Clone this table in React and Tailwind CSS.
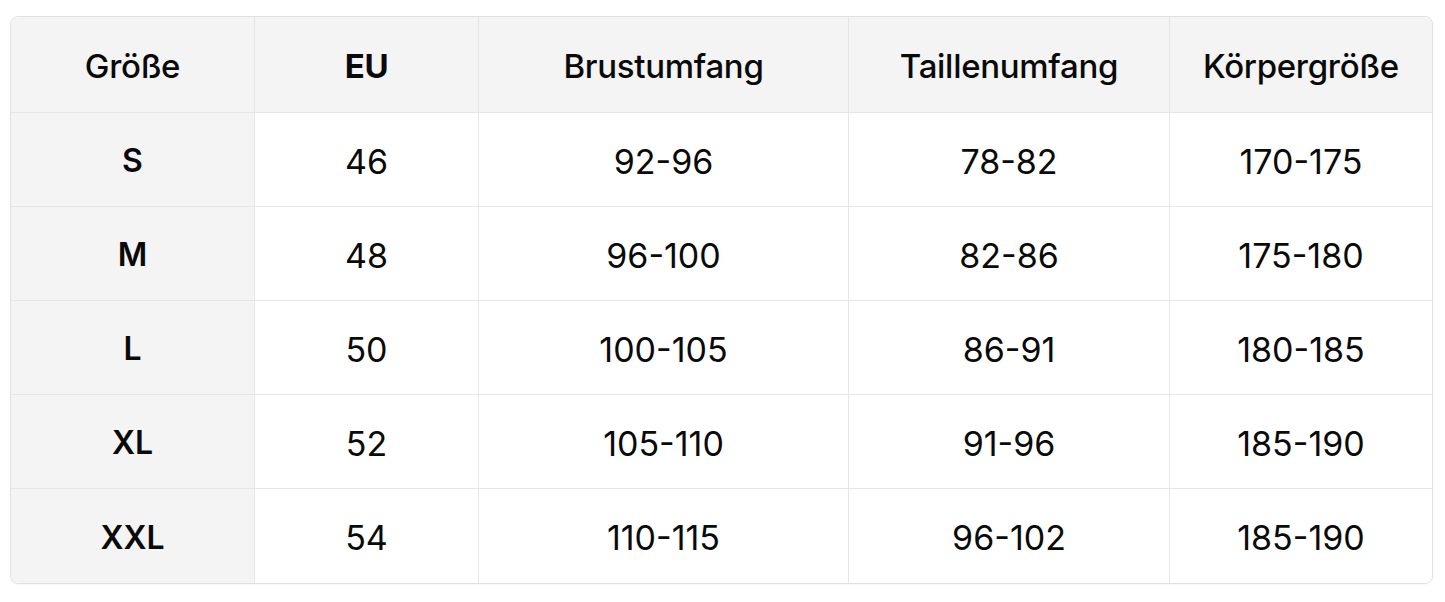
import React from 'react'

const HEAD = ['Größe', 'EU', 'Brustumfang', 'Taillenumfang', 'Körpergröße']

const ROWS = [
  ['S', '46', '92-96', '78-82', '170-175'],
  ['M', '48', '96-100', '82-86', '175-180'],
  ['L', '50', '100-105', '86-91', '180-185'],
  ['XL', '52', '105-110', '91-96', '185-190'],
  ['XXL', '54', '110-115', '96-102', '185-190'],
]

export default function App() {
  return (
    <div className="w-[1445px] h-[602px] bg-white pt-[16px] pl-[10px]" style={{ fontFamily: 'Inter, "Noto Sans", sans-serif' }}>
      <div className="w-[1423px] rounded-[8px] border border-[#e0e0e0] overflow-hidden shadow-[0_1px_2px_rgba(0,0,0,0.04)]">
        <div className="grid grid-cols-[244px_224px_370px_321px_262px] text-[#0a0a0a]">
          {HEAD.map((h, i) => (
            <div
              key={h}
              className={
                'h-[96px] flex items-center justify-center pt-[5px] bg-[#f4f4f4] border-b border-[#e6e6e6] text-[33px] tracking-[-0.3px] ' +
                (i === 1 ? 'font-bold ' : 'font-medium ') +
                (i < 4 ? 'border-r' : '')
              }
            >
              {h}
            </div>
          ))}
          {ROWS.map((row, r) =>
            row.map((c, i) => (
              <div
                key={r + '-' + i}
                className={
                  'h-[94px] flex items-center justify-center pt-[3px] ' +
                  (i === 0 ? 'bg-[#f4f4f4] font-semibold text-[32px] ' : 'bg-white font-normal text-[34px] ') +
                  (i < 4 ? 'border-r border-[#e6e6e6] ' : '') +
                  (r < 4 ? 'border-b border-[#e6e6e6]' : '')
                }
              >
                {c}
              </div>
            ))
          )}
        </div>
      </div>
    </div>
  )
}
